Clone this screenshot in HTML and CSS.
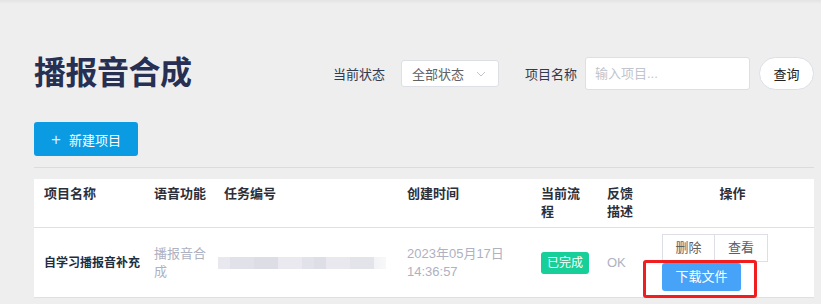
FILE: index.html
```html
<!DOCTYPE html>
<html lang="zh-CN">
<head>
  <meta charset="UTF-8" />
  <meta name="viewport" content="width=device-width, initial-scale=1.0"/>
  <title>播报音合成</title>
  <link rel="stylesheet" href="styles.css">
</head>
<body>
  <div class="page">
    <div class="title-row">
      <h1 class="title">播报音合成</h1>
      <div class="filters">
        <span class="label">当前状态</span>
        <div class="select">
          <span>全部状态</span>
          <svg class="chevron" width="10" height="6" viewBox="0 0 10 6"><path d="M1 1 L5 5 L9 1" fill="none" stroke="#c0c4cc" stroke-width="1"/></svg>
        </div>
        <span class="label label-name">项目名称</span>
        <div class="input">输入项目...</div>
        <button class="btn-query">查询</button>
      </div>
    </div>

    <button class="btn-new"><span class="plus">+</span>新建项目</button>

    <div class="divider"></div>

    <table class="grid">
      <colgroup>
        <col class="c-name">
        <col class="c-func">
        <col class="c-task">
        <col class="c-time">
        <col class="c-flow">
        <col class="c-desc">
        <col class="c-ops">
      </colgroup>
      <thead>
        <tr>
          <th>项目名称</th>
          <th>语音功能</th>
          <th>任务编号</th>
          <th>创建时间</th>
          <th class="narrow">当前流程</th>
          <th class="narrow">反馈描述</th>
          <th class="center">操作</th>
        </tr>
      </thead>
      <tbody>
        <tr>
          <td class="name">自学习播报音补充</td>
          <td class="muted">播报音合成</td>
          <td><span class="blurred"></span></td>
          <td class="muted">2023年05月17日 14:36:57</td>
          <td class="narrow"><span class="tag">已完成</span></td>
          <td class="muted narrow">OK</td>
          <td class="ops">
            <div class="ops-box">
              <div class="btn-group">
                <button class="btn-plain">删除</button>
                <button class="btn-plain">查看</button>
              </div>
              <div class="mark-wrap">
                <button class="btn-download">下载文件</button>
                <div class="mark"></div>
              </div>
            </div>
          </td>
        </tr>
      </tbody>
    </table>
  </div>
</body>
</html>
```

FILE: styles.css
```css
body {
  margin: 0;
  font-family: "Liberation Sans", "Noto Sans CJK SC", sans-serif;
  background-color: #eeeeee;
  background-image: linear-gradient(to bottom, #e3e3e3 0, #eeeeee 4px);
  background-repeat: no-repeat;
  color: #333;
}

.page {
  padding: 57px 7px 0 34px;
}

.title-row {
  display: flex;
  align-items: center;
  height: 33px;
}

.title {
  margin: 0;
  font-size: 32px;
  line-height: 33px;
  font-weight: 700;
  color: #272f52;
  letter-spacing: -0.5px;
}

.filters {
  margin-left: auto;
  display: flex;
  align-items: center;
  font-size: 13px;
}

.label {
  color: #333a4d;
  margin-right: 16px;
}

.label-name {
  margin-left: 26px;
  margin-right: 8px;
}

.select {
  box-sizing: border-box;
  width: 98px;
  height: 27px;
  background: #fff;
  border: 1px solid #dcdfe6;
  border-radius: 3px;
  display: flex;
  align-items: center;
  padding: 0 12px 0 10px;
  color: #606266;
}

.chevron {
  margin-left: auto;
}

.input {
  box-sizing: border-box;
  width: 165px;
  height: 33px;
  background: #fff;
  border: 1px solid #dcdfe6;
  border-radius: 3px;
  padding-left: 9px;
  line-height: 31px;
  color: #c0c4cc;
}

.btn-query {
  box-sizing: border-box;
  margin-left: 9px;
  width: 55px;
  height: 33px;
  background: #fff;
  border: 1px solid #dcdfe6;
  border-radius: 17px;
  font: inherit;
  font-size: 13px;
  color: #222;
  padding: 0;
}

.btn-new {
  margin-top: 32px;
  width: 104px;
  height: 34px;
  border: 0;
  border-radius: 3px;
  background: #0a9be2;
  color: #fff;
  font: inherit;
  font-size: 13px;
  padding: 0;
  display: flex;
  align-items: center;
  justify-content: center;
}

.plus {
  font-size: 17px;
  font-weight: 300;
  margin-right: 8px;
  color: #d6eefb;
  line-height: 1;
}

.divider {
  margin-top: 11px;
  height: 1px;
  background: #dcdcdc;
}

.grid {
  margin-top: 11px;
  width: 100%;
  border-collapse: collapse;
  table-layout: fixed;
  background: #fff;
  font-size: 13px;
  line-height: 18px;
}

.c-name { width: 110px; }
.c-func { width: 70px; }
.c-task { width: 183px; }
.c-time { width: 134px; }
.c-flow { width: 66px; }
.c-desc { width: 54px; }

.grid th {
  text-align: left;
  vertical-align: top;
  font-weight: 700;
  color: #2c2f3a;
  padding: 6px 4px 6px 10px;
  border-bottom: 1px solid #e0e0e0;
}

.grid th.center {
  text-align: center;
  padding-left: 10px;
  padding-right: 10px;
}

.grid td {
  vertical-align: middle;
  padding: 6px 4px 6px 10px;
  border-bottom: 1px solid #e0e0e0;
}

.grid th.narrow,
.grid td.narrow {
  padding-right: 12px;
}

.grid td.name {
  font-size: 12px;
  font-weight: 700;
  color: #1f2d3d;
  white-space: nowrap;
  padding-right: 0;
}

.grid td.muted {
  color: #aeb1c2;
}

.blurred {
  display: block;
  margin-left: -6px;
  width: 168px;
  height: 12px;
  background: linear-gradient(to right,
    #e8e8ee 0, #e8e8ee 12px,
    #e1e2e9 12px, #e1e2e9 36px,
    #dcdde5 36px, #dcdde5 60px,
    #e9e9ef 60px, #e9e9ef 84px,
    #e2e3ea 84px, #e2e3ea 96px,
    #dddee6 96px, #dddee6 108px,
    #e8e8ee 108px, #e8e8ee 132px,
    #e3e3ea 132px, #e3e3ea 156px,
    #f2f3f6 156px, #f8f8fa 168px);
}

.tag {
  display: inline-block;
  white-space: nowrap;
  padding: 2px 6px;
  border-radius: 3px;
  background: #17cf98;
  color: #fff;
  font-size: 12px;
}

.grid td.ops {
  vertical-align: top;
  padding-left: 11px;
}

.ops-box {
  display: flex;
  flex-direction: column;
  align-items: flex-start;
}

.btn-group {
  display: flex;
}

.btn-plain {
  box-sizing: border-box;
  width: 53px;
  height: 28px;
  background: #fff;
  border: 1px solid #dcdfe6;
  font: inherit;
  font-size: 13px;
  color: #5a5e66;
  padding: 0;
}

.btn-plain + .btn-plain {
  margin-left: -1px;
  width: 54px;
}

.mark-wrap {
  position: relative;
  margin-top: 1px;
}

.btn-download {
  display: block;
  width: 79px;
  height: 28px;
  border: 0;
  border-radius: 3px;
  background: #47a3f8;
  color: #fff;
  font: inherit;
  font-size: 13px;
  padding: 0;
}

.mark {
  position: absolute;
  left: -19px;
  top: -3px;
  width: 108px;
  height: 32px;
  border: 3px solid #f01e1e;
  border-radius: 3px;
}
```
